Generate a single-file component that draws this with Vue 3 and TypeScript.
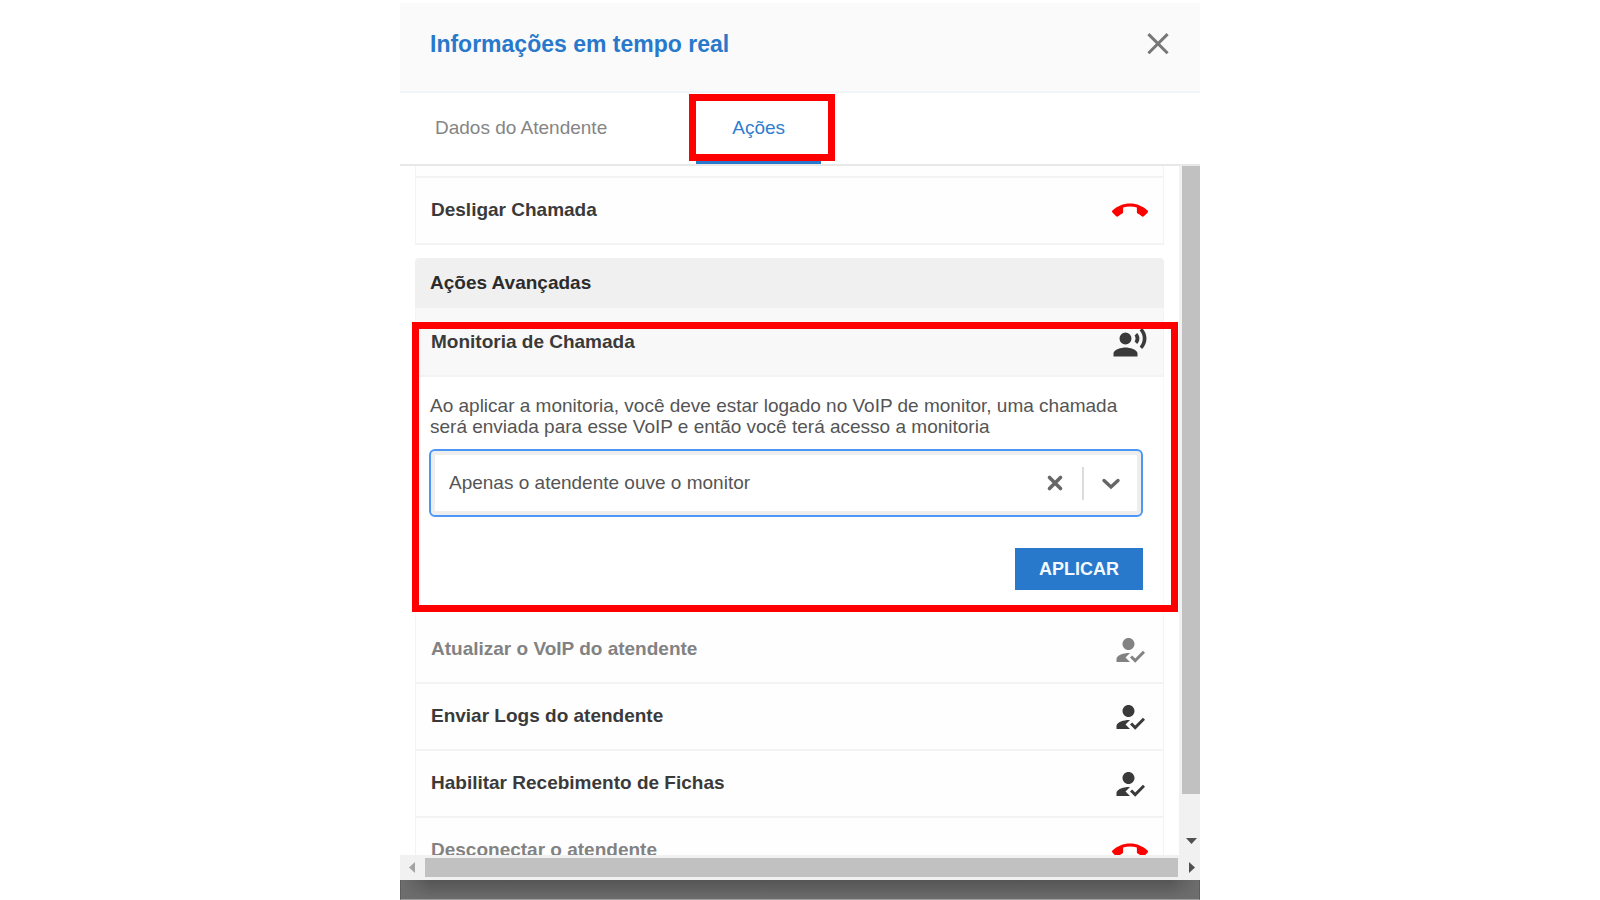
<script setup lang="ts">
import { ref } from 'vue'

interface ActionRow {
  label: string
  icon: 'check' | 'hangup'
  disabled: boolean
}

const icons = {
  hangup:
    'M12 9c-1.6 0-3.15.25-4.6.72v3.1c0 .39-.23.74-.56.9-.98.49-1.87 1.12-2.66 1.85-.18.18-.43.28-.7.28-.28 0-.53-.11-.71-.29L.29 13.08c-.18-.17-.29-.42-.29-.7 0-.28.11-.53.29-.71C3.34 8.78 7.46 7 12 7s8.66 1.78 11.71 4.67c.18.18.29.43.29.71 0 .28-.11.53-.29.71l-2.48 2.48c-.18.18-.43.29-.71.29-.27 0-.52-.11-.7-.28-.79-.74-1.69-1.36-2.67-1.85-.33-.16-.56-.5-.56-.9v-3.1C15.15 9.25 13.6 9 12 9z',
  check:
    'M9 17l3-2.94c-.39-.04-.68-.06-1-.06-2.67 0-8 1.34-8 4v2h9l-3-3zm2-5c2.21 0 4-1.79 4-4s-1.79-4-4-4-4 1.79-4 4 1.79 4 4 4zm4.47 8.5L12 17l1.4-1.41 2.07 2.08 5.13-5.17 1.4 1.41z',
  voice:
    'M9 5a4 4 0 1 0 0 8a4 4 0 1 0 0-8zM9 15c-2.67 0-8 1.34-8 4v2h16v-2c0-2.66-5.33-4-8-4zm7.76-9.64l-1.68 1.69c.84 1.18.84 2.71 0 3.89l1.68 1.69c2.02-2.02 2.02-5.07 0-7.27zM20.07 2l-1.63 1.63c2.77 3.02 2.77 7.56 0 10.74L20.07 16c3.9-3.89 3.91-9.95 0-14z',
}

const rows: ActionRow[] = [
  { label: 'Atualizar o VoIP do atendente', icon: 'check', disabled: true },
  { label: 'Enviar Logs do atendente', icon: 'check', disabled: false },
  { label: 'Habilitar Recebimento de Fichas', icon: 'check', disabled: false },
  { label: 'Desconectar o atendente', icon: 'hangup', disabled: true },
]

const monitorMode = ref('agent')
</script>

<template>
  <div class="page">
    <section class="panel">
      <header class="header">
        <h1 class="title">Informações em tempo real</h1>
        <button class="icon-button" type="button" aria-label="Fechar">
          <svg class="icon" viewBox="0 0 24 24">
            <path d="M5.6 5.4 18.4 18.2M18.4 5.4 5.6 18.2" fill="none" stroke="currentColor" stroke-width="2" />
          </svg>
        </button>
      </header>

      <nav class="tabs" role="tablist">
        <button class="tab" type="button" role="tab" aria-selected="false">Dados do Atendente</button>
        <button class="tab tab-active" type="button" role="tab" aria-selected="true">
          Ações
          <span class="mark mark-tab"></span>
        </button>
      </nav>

      <div class="body">
        <main class="content">
          <div class="row row-previous"></div>
          <button class="row" type="button">
            <span class="row-label">Desligar Chamada</span>
            <svg class="icon icon-red" viewBox="0 0 24 24"><path :d="icons.hangup" /></svg>
          </button>

          <h2 class="section">Ações Avançadas</h2>

          <div class="monitor">
            <button class="row row-open" type="button" aria-expanded="true">
              <span class="row-label">Monitoria de Chamada</span>
              <svg class="icon" viewBox="0 0 24 24"><path :d="icons.voice" /></svg>
            </button>
            <div class="monitor-body">
              <label class="hint" for="monitor-mode">
                Ao aplicar a monitoria, você deve estar logado no VoIP de monitor, uma chamada será enviada para esse
                VoIP e então você terá acesso a monitoria
              </label>
              <div class="select-box">
                <select id="monitor-mode" v-model="monitorMode" class="select">
                  <option value="agent">Apenas o atendente ouve o monitor</option>
                </select>
                <button class="clear" type="button" aria-label="Limpar">
                  <svg class="glyph" viewBox="0 0 24 24">
                    <path d="M6.5 6.5 17.5 17.5M17.5 6.5 6.5 17.5" fill="none" stroke="currentColor" stroke-width="3.6" stroke-linecap="round" />
                  </svg>
                </button>
                <span class="divider"></span>
                <svg class="glyph chevron" viewBox="0 0 24 24" aria-hidden="true">
                  <path d="M5 9.5 12 16 19 9.5" fill="none" stroke="currentColor" stroke-width="3.4" stroke-linecap="round" />
                </svg>
              </div>
              <button class="apply" type="button">APLICAR</button>
            </div>
            <span class="mark mark-monitor"></span>
          </div>

          <button v-for="row in rows" :key="row.label" class="row" :class="{ 'row-disabled': row.disabled }" type="button">
            <span class="row-label">{{ row.label }}</span>
            <svg class="icon" :class="{ 'icon-red': row.icon === 'hangup' }" viewBox="0 0 24 24">
              <path :d="icons[row.icon]" />
            </svg>
          </button>
        </main>
        <div class="vbar" aria-hidden="true">
          <span class="vthumb"></span>
          <svg class="arrow" viewBox="0 0 12 12"><path d="M1 3h11L6.5 9z" /></svg>
        </div>
      </div>

      <div class="hbar" aria-hidden="true">
        <svg class="arrow arrow-off" viewBox="0 0 12 12"><path d="M9 0v11L3 5.500z" /></svg>
        <span class="hthumb"></span>
        <svg class="arrow" viewBox="0 0 12 12"><path d="M4 0v11l6-5.500z" /></svg>
      </div>
    </section>
    <div class="backdrop"></div>
  </div>
</template>

<style>
body {
  background: #fff;
}
</style>

<style scoped>
.page {
  box-sizing: border-box;
  display: flex;
  flex-direction: column;
  width: 50%;
  height: 100vh;
  margin: 0 auto;
  padding-top: 3px;
  overflow: hidden;
  font-family: "Liberation Sans", Arial, sans-serif;
  font-size: 19px;
  color: #3a3a3a;
}
.page * {
  box-sizing: border-box;
}
button {
  margin: 0;
  padding: 0;
  border: 0;
  background: none;
  color: inherit;
  font: inherit;
}
.panel {
  flex: 1;
  min-height: 0;
  display: flex;
  flex-direction: column;
}
.header {
  display: flex;
  align-items: center;
  justify-content: space-between;
  height: 90px;
  padding: 0 24px 6px 30px;
  background: #fafafa;
  border-bottom: 2px solid #f0f5fa;
}
.title {
  margin: 0;
  font-size: 23px;
  font-weight: 700;
  color: #2878cc;
}
.icon-button {
  display: flex;
  color: #777;
}
.icon {
  flex: none;
  width: 36px;
  height: 36px;
  fill: currentColor;
}
.icon-red {
  color: #f00;
}
.tabs {
  display: flex;
  gap: 54px;
  height: 73px;
  border-bottom: 2px solid #e8e8e8;
}
.tab {
  position: relative;
  min-width: 125px;
  padding: 2px 35px 0;
  border-bottom: 3px solid transparent;
  color: #858585;
}
.tab-active {
  color: #2f7dd0;
  border-bottom-color: #2878cc;
}
.mark {
  position: absolute;
  border: 7px solid #f00;
  pointer-events: none;
}
.mark-tab {
  inset: 1px -14px 0 -7px;
}
.mark-monitor {
  inset: 12px -14px 5px -3px;
}
.body {
  flex: 1;
  min-height: 0;
  display: flex;
}
.content {
  flex: 1;
  min-width: 0;
  overflow: hidden;
  padding: 0 15px;
}
.row {
  display: flex;
  align-items: center;
  justify-content: space-between;
  width: 100%;
  height: 67px;
  padding: 0 15px;
  border: solid #f3f3f3;
  border-width: 0 1px 2px;
  background: #fefefe;
  font-weight: 700;
  text-align: left;
}
.row-label {
  padding-bottom: 2px;
}
.row-previous {
  height: 12px;
}
.row-open {
  background: #f8f8f8;
}
.row-disabled {
  color: #828282;
}
.section {
  margin: 13px 0 0;
  padding: 0 15px;
  border-bottom: 2px solid #f8f8f8;
  border-radius: 4px 4px 0 0;
  background: #f0f0f0;
  font-size: 19px;
  font-weight: 700;
  line-height: 50px;
  color: #2c2c2c;
}
.monitor {
  position: relative;
}
.monitor-body {
  display: flex;
  flex-direction: column;
  padding: 18px 20px 27px 13px;
  border: solid #f8f8f8;
  border-width: 0 1px;
}
.hint {
  padding-left: 1px;
  line-height: 21px;
  color: #555;
}
.select-box {
  display: flex;
  align-items: center;
  height: 68px;
  margin: 12px 0 31px;
  padding-right: 18px;
  border: 2px solid #4c97f5;
  border-radius: 6px;
  background: #fff;
  box-shadow: inset 0 0 0 4px #eee;
}
.select {
  flex: 1;
  min-width: 0;
  height: 52px;
  margin-left: 4px;
  padding: 0 14px 2px;
  border: 0;
  outline: 0;
  appearance: none;
  background: transparent;
  color: #555;
  font: inherit;
}
.clear {
  display: flex;
}
.glyph {
  width: 24px;
  height: 24px;
  color: #666;
}
.divider {
  width: 2px;
  height: 33px;
  margin: 0 15px;
  background: #dcdcdc;
}
.apply {
  align-self: flex-end;
  width: 128px;
  height: 42px;
  background: #2878cc;
  color: #f4f9ff;
  font-size: 18px;
  font-weight: 700;
}
.vbar {
  display: flex;
  flex-direction: column;
  align-items: center;
  gap: 41px;
  width: 21px;
  padding: 0 0 8px 3px;
  background: #f1f1f1;
}
.vthumb {
  flex: 1;
  width: 100%;
  background: #c1c1c1;
}
.arrow {
  flex: none;
  width: 12px;
  height: 12px;
  fill: #505050;
}
.arrow-off {
  fill: #a3a3a3;
}
.hbar {
  display: flex;
  align-items: center;
  gap: 7px;
  height: 25px;
  padding: 0 3px 0 6px;
  background: #f1f1f1;
}
.hthumb {
  flex: 1;
  height: 19px;
  background: #c1c1c1;
}
.backdrop {
  flex: none;
  height: 20px;
  border: solid #5c5c5c;
  border-width: 0 1px;
  border-bottom: 1px solid #a0a0a0;
  background:
    linear-gradient(90deg, #6e6e6e, transparent 30px, transparent calc(100% - 30px), #6e6e6e),
    linear-gradient(#555, #6c6c6c);
}
</style>
